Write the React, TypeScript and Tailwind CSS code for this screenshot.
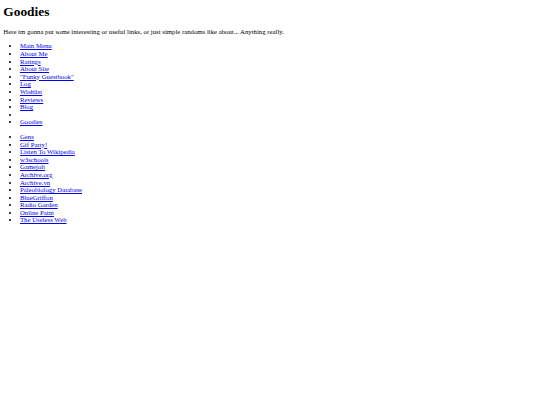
const menu = [
  "Main Menu",
  "About Me",
  "Ratings",
  "About Site",
  "\"Funky Guestbook\"",
  "Log",
  "Wishlist",
  "Reviews",
  "Blog",
  "",
  "Goodies",
];

const goodies = [
  "Gens",
  "Gif Party!",
  "Listen To Wikipedia",
  "w3schools",
  "Gamejolt",
  "Archive.org",
  "Archive.vn",
  "Paleobiology Database",
  "BlueGriffon",
  "Radio Garden",
  "Online Paint",
  "The Useless Web",
];

function LinkList({ items, className }: { items: string[]; className: string }) {
  return (
    <ul className={`list-disc pl-[16.7px] ${className}`}>
      {items.map((label, i) => (
        <li key={i} className="leading-[7.58px]">
          {label ? (
            <a href="#" className="text-[#0000ee] underline">
              {label}
            </a>
          ) : (
            <>&nbsp;</>
          )}
        </li>
      ))}
    </ul>
  );
}

export default function App() {
  return (
    <div className="min-h-screen bg-white text-black px-[3.3px] font-['Liberation_Serif','Times_New_Roman',serif] text-[6.75px] leading-[7.7px]">
      {/* Header */}
      <h1 className="pt-[3.8px] text-[13.4px] leading-[15.4px] font-bold">Goodies</h1>
      <p className="mt-[8.4px]">
        Here im gonna put some interesting or useful links, or just simple randoms like about... Anything really.
      </p>

      {/* Links */}
      <LinkList items={menu} className="mt-[7.2px]" />
      <LinkList items={goodies} className="mt-[7.2px]" />
    </div>
  );
}
